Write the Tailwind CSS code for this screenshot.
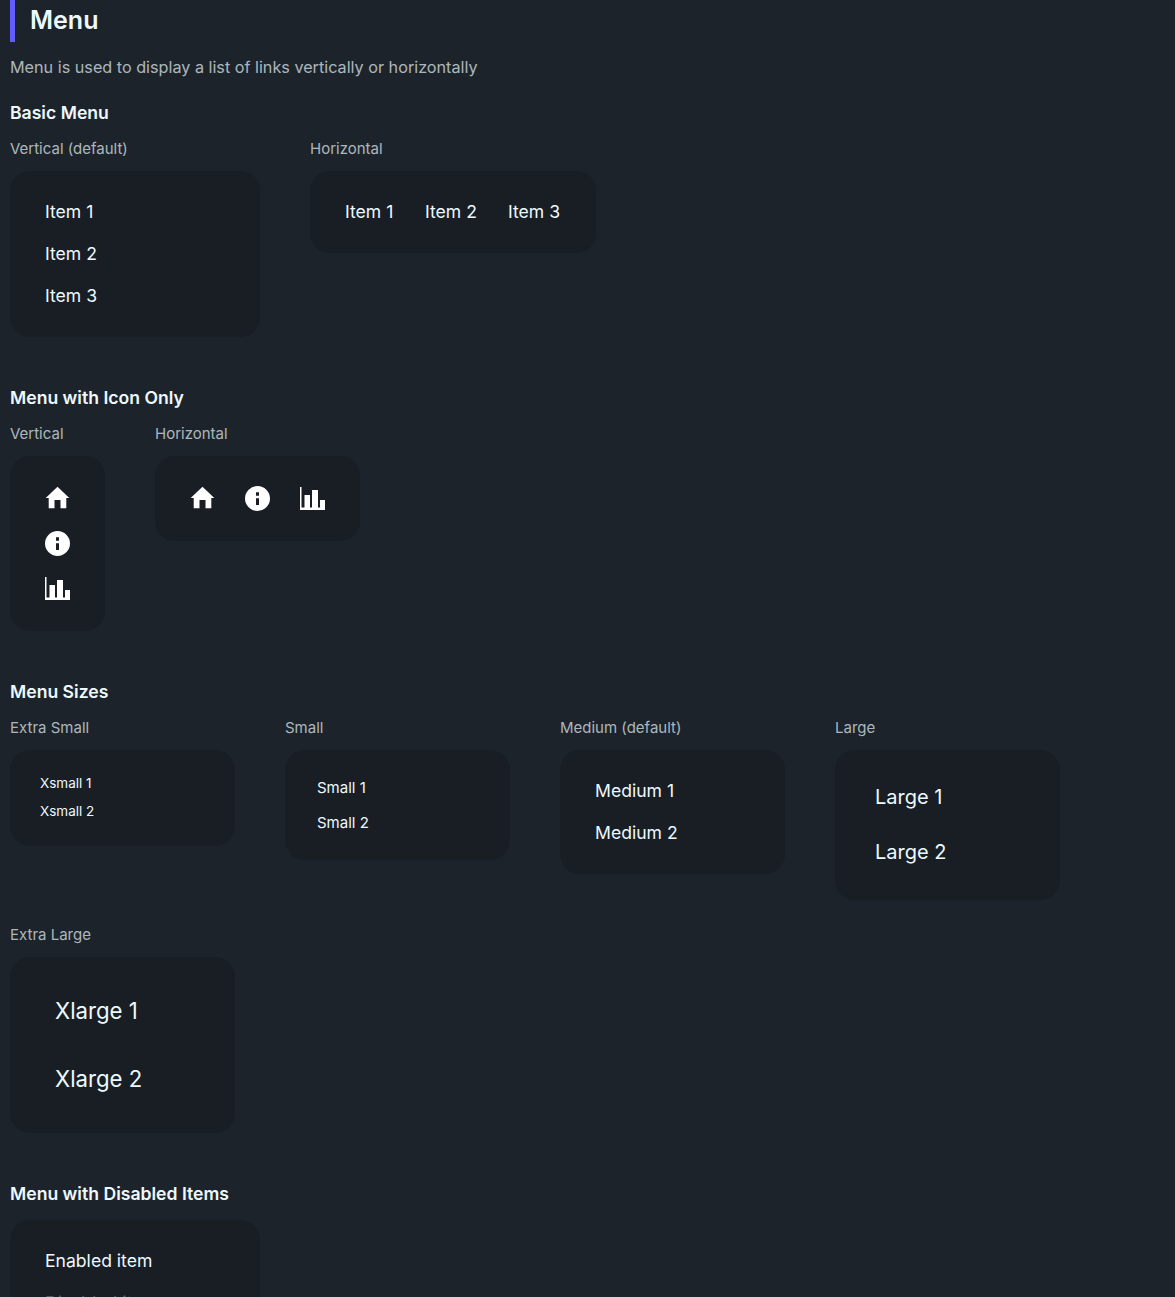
<!DOCTYPE html>
<html>
<head>
<meta charset="utf-8">
<script src="https://cdn.jsdelivr.net/npm/@tailwindcss/browser@4"></script>
</head>
<body class="bg-[#1d232a] text-[#ecf9ff] font-['Inter',sans-serif] h-[1297px] overflow-hidden">
<main class="px-[10px]">
  <h1 class="border-l-[5px] border-[#605dff] pl-[15px] h-[42px] text-[25px] leading-[40px] font-semibold">Menu</h1>
  <p class="mt-[14px] text-[16.200px] leading-[22px] text-[#ecf9ff]/70">Menu is used to display a list of links vertically or horizontally</p>

  <h2 class="mt-[23px] text-[17.600px] leading-[24px] font-semibold">Basic Menu</h2>
  <div class="mt-[14px] flex gap-[50px]">
    <div>
      <p class="text-[15px] leading-[20px] mb-[12px] text-[#ecf9ff]/70">Vertical (default)</p>
      <ul class="w-[250px] p-[20px] rounded-[20px] bg-[#191e24] text-[17.600px] leading-[22px]">
        <li class="px-[15px] py-[10px]">Item 1</li>
        <li class="px-[15px] py-[10px]">Item 2</li>
        <li class="px-[15px] py-[10px]">Item 3</li>
      </ul>
    </div>
    <div>
      <p class="text-[15px] leading-[20px] mb-[12px] text-[#ecf9ff]/70">Horizontal</p>
      <ul class="flex p-[20px] rounded-[20px] bg-[#191e24] text-[17.600px] leading-[22px]">
        <li class="w-[80px] px-[15px] py-[10px]">Item 1</li>
        <li class="w-[83px] px-[15px] py-[10px]">Item 2</li>
        <li class="w-[83px] px-[15px] py-[10px]">Item 3</li>
      </ul>
    </div>
  </div>

  <h2 class="mt-[49px] text-[17.600px] leading-[24px] font-semibold">Menu with Icon Only</h2>
  <div class="mt-[14px] flex gap-[50px]">
    <div>
      <p class="text-[15px] leading-[20px] mb-[12px] text-[#ecf9ff]/70">Vertical</p>
      <ul class="w-[95px] p-[20px] rounded-[20px] bg-[#191e24] text-white">
        <li class="px-[15px] py-[10px]"><svg class="block w-[25px] h-[25px]" viewBox="0 0 25 25" fill="currentColor"><path d="M12.500 .7 .7 12h3v10.300h5.800V14h6v8.300h5.800V12h3z"/></svg></li>
        <li class="px-[15px] py-[10px]"><svg class="block w-[25px] h-[25px]" viewBox="0 0 25 25" fill="currentColor"><path fill-rule="evenodd" d="M12.500 0a12.500 12.500 0 1 0 0 25 12.500 12.500 0 0 0 0-25zM11 6.300h3v3.400h-3zM11 12.300h3V19h-3z"/></svg></li>
        <li class="px-[15px] py-[10px]"><svg class="block w-[25px] h-[25px]" viewBox="0 0 25 25" fill="currentColor"><path d="M0 1h1.500v20.500H25V24H0zM4.500 9H10v12.500H4.500zM12 4h6v17.500h-6zM20 14h5v7.500h-5z"/></svg></li>
      </ul>
    </div>
    <div>
      <p class="text-[15px] leading-[20px] mb-[12px] text-[#ecf9ff]/70">Horizontal</p>
      <ul class="flex p-[20px] rounded-[20px] bg-[#191e24] text-white">
        <li class="px-[15px] py-[10px]"><svg class="block w-[25px] h-[25px]" viewBox="0 0 25 25" fill="currentColor"><path d="M12.500 .7 .7 12h3v10.300h5.800V14h6v8.300h5.800V12h3z"/></svg></li>
        <li class="px-[15px] py-[10px]"><svg class="block w-[25px] h-[25px]" viewBox="0 0 25 25" fill="currentColor"><path fill-rule="evenodd" d="M12.500 0a12.500 12.500 0 1 0 0 25 12.500 12.500 0 0 0 0-25zM11 6.300h3v3.400h-3zM11 12.300h3V19h-3z"/></svg></li>
        <li class="px-[15px] py-[10px]"><svg class="block w-[25px] h-[25px]" viewBox="0 0 25 25" fill="currentColor"><path d="M0 1h1.500v20.500H25V24H0zM4.500 9H10v12.500H4.500zM12 4h6v17.500h-6zM20 14h5v7.500h-5z"/></svg></li>
      </ul>
    </div>
  </div>

  <h2 class="mt-[49px] text-[17.600px] leading-[24px] font-semibold">Menu Sizes</h2>
  <div class="mt-[14px] flex flex-wrap gap-x-[50px] gap-y-[25px] items-start">
    <div>
      <p class="text-[15px] leading-[20px] mb-[12px] text-[#ecf9ff]/70">Extra Small</p>
      <ul class="w-[225px] p-[20px] rounded-[20px] bg-[#191e24] text-[13.500px] leading-[18px]">
        <li class="px-[10px] pt-[4px] pb-[6px]">Xsmall 1</li>
        <li class="px-[10px] pt-[4px] pb-[6px]">Xsmall 2</li>
      </ul>
    </div>
    <div>
      <p class="text-[15px] leading-[20px] mb-[12px] text-[#ecf9ff]/70">Small</p>
      <ul class="w-[225px] p-[20px] rounded-[20px] bg-[#191e24] text-[15px] leading-[20px]">
        <li class="px-[12px] py-[7.500px]">Small 1</li>
        <li class="px-[12px] py-[7.500px]">Small 2</li>
      </ul>
    </div>
    <div>
      <p class="text-[15px] leading-[20px] mb-[12px] text-[#ecf9ff]/70">Medium (default)</p>
      <ul class="w-[225px] p-[20px] rounded-[20px] bg-[#191e24] text-[17.600px] leading-[22px]">
        <li class="px-[15px] py-[10px]">Medium 1</li>
        <li class="px-[15px] py-[10px]">Medium 2</li>
      </ul>
    </div>
    <div>
      <p class="text-[15px] leading-[20px] mb-[12px] text-[#ecf9ff]/70">Large</p>
      <ul class="w-[225px] p-[20px] rounded-[20px] bg-[#191e24] text-[20px] leading-[25px]">
        <li class="px-[20px] py-[15px]">Large 1</li>
        <li class="px-[20px] py-[15px]">Large 2</li>
      </ul>
    </div>
    <div>
      <p class="text-[15px] leading-[20px] mb-[12px] text-[#ecf9ff]/70">Extra Large</p>
      <ul class="w-[225px] p-[20px] rounded-[20px] bg-[#191e24] text-[22.200px] leading-[28px]">
        <li class="px-[25px] py-[20px]">Xlarge 1</li>
        <li class="px-[25px] py-[20px]">Xlarge 2</li>
      </ul>
    </div>
  </div>

  <h2 class="mt-[49px] text-[17.600px] leading-[24px] font-semibold">Menu with Disabled Items</h2>
  <ul class="mt-[14px] w-[250px] p-[20px] rounded-[20px] bg-[#191e24] text-[17.600px] leading-[22px]">
    <li class="px-[15px] py-[10px]">Enabled item</li>
    <li class="px-[15px] py-[10px] text-[#ecf9ff]/30">Disabled item</li>
  </ul>
</main>
</body>
</html>
